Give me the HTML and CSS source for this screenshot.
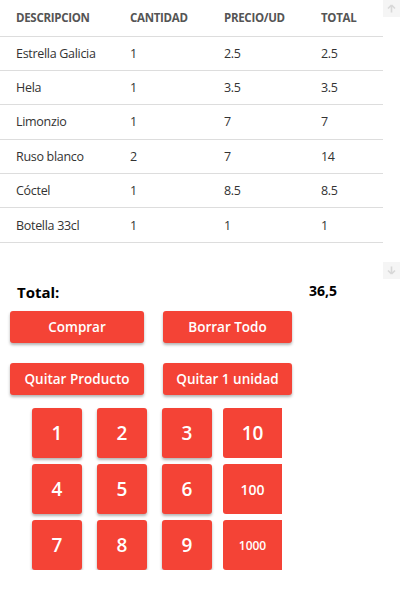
FILE: index.html
```html
<!DOCTYPE html>
<html lang="es">
<head>
<meta charset="utf-8">
<title>Caja</title>
<link rel="stylesheet" href="styles.css">
</head>
<body>
<div class="scroll-area">
  <table class="tabla">
    <thead>
      <tr><th class="c1">DESCRIPCION</th><th class="c2">CANTIDAD</th><th class="c3">PRECIO/UD</th><th class="c4">TOTAL</th></tr>
    </thead>
    <tbody>
      <tr><td>Estrella Galicia</td><td>1</td><td>2.5</td><td>2.5</td></tr>
      <tr><td>Hela</td><td>1</td><td>3.5</td><td>3.5</td></tr>
      <tr><td>Limonzio</td><td>1</td><td>7</td><td>7</td></tr>
      <tr><td>Ruso blanco</td><td>2</td><td>7</td><td>14</td></tr>
      <tr><td>Cóctel</td><td>1</td><td>8.5</td><td>8.5</td></tr>
      <tr><td>Botella 33cl</td><td>1</td><td>1</td><td>1</td></tr>
    </tbody>
  </table>
  <div class="scrollbar">
    <div class="sb-btn"><svg width="9" height="9" viewBox="0 0 9 9"><path d="M4.5 1 L1 4.5 M4.5 1 L8 4.5 M4.5 1 V8.5" stroke="#d8d8d8" stroke-width="1.6" fill="none"/></svg></div>
    <div class="sb-btn"><svg width="9" height="9" viewBox="0 0 9 9"><path d="M4.5 8 L1 4.5 M4.5 8 L8 4.5 M4.5 8 V0.5" stroke="#d8d8d8" stroke-width="1.6" fill="none"/></svg></div>
  </div>
</div>
<div class="total-row"><span class="total-label">Total:</span><span class="total-value">36,5</span></div>
<div class="acciones">
  <button class="btn">Comprar</button>
  <button class="btn btn-b">Borrar Todo</button>
  <button class="btn">Quitar Producto</button>
  <button class="btn btn-b">Quitar 1 unidad</button>
</div>
<div class="pad">
  <button class="key">1</button><button class="key">2</button><button class="key">3</button><button class="key key-x">10</button>
  <button class="key">4</button><button class="key">5</button><button class="key">6</button><button class="key key-x k100">100</button>
  <button class="key">7</button><button class="key">8</button><button class="key">9</button><button class="key key-x k1000">1000</button>
</div>
</body>
</html>
```
FILE: styles.css
```css
* { box-sizing: border-box; }
body {
  margin: 0;
  font-family: "Open Sans", "Noto Sans", sans-serif;
  background: #fff;
  color: #333;
}
.scroll-area {
  display: flex;
  width: 400px;
  height: 279px;
}
.tabla {
  width: 383px;
  border-collapse: collapse;
  align-self: flex-start;
}
.tabla th {
  text-align: left;
  font-size: 11.5px;
  font-weight: 700;
  color: #555;
  height: 36px;
  padding: 0 0 0 16px;
  border-bottom: 1px solid #ddd;
  letter-spacing: -0.3px;
}
.tabla td {
  font-size: 12.5px;
  color: #333;
  height: 34.4px;
  padding: 0 0 0 16px;
  border-bottom: 1px solid #ddd;
  letter-spacing: -0.3px;
}
.tabla .c1 { width: 114px; }
.tabla .c2 { width: 94px; }
.tabla .c3 { width: 97px; }
.scrollbar {
  width: 17px;
  display: flex;
  flex-direction: column;
  justify-content: space-between;
}
.sb-btn {
  width: 17px;
  height: 17px;
  background: #f5f5f5;
  display: flex;
  align-items: center;
  justify-content: center;
}
.total-row {
  display: flex;
  padding: 3px 0 0 17px;
  height: 32px;
  color: #000;
  font-weight: 700;
}
.total-label { font-size: 15px; width: 292px; }
.total-value { font-size: 14px; margin-top: -1px; }
.acciones {
  display: grid;
  grid-template-columns: 134px 129px;
  column-gap: 19px;
  row-gap: 20px;
  padding-left: 10px;
}
.btn {
  height: 32px;
  border: none;
  border-radius: 3px;
  background: #f44336;
  color: #fff;
  font-family: inherit;
  font-size: 13.5px;
  font-weight: 600;
  box-shadow: 0 2px 3px rgba(0,0,0,0.3);
  padding: 0;
}
.pad {
  display: grid;
  grid-template-columns: 50px 50px 50px 59px;
  grid-auto-rows: 50px;
  column-gap: 15px;
  row-gap: 6px;
  padding-left: 32px;
  margin-top: 13px;
}
.key {
  border: none;
  border-radius: 3px;
  background: #f44336;
  color: #fff;
  font-family: inherit;
  font-size: 19px;
  font-weight: 600;
  box-shadow: 0 2px 3px rgba(0,0,0,0.3);
  padding: 0;
}
.key-x {
  width: 59px;
  justify-self: start;
  margin-left: -4px;
  box-shadow: none;
  border-radius: 3px 0 0 3px;
}
.k100 { font-size: 14px; }
.k1000 { font-size: 12px; }
```
